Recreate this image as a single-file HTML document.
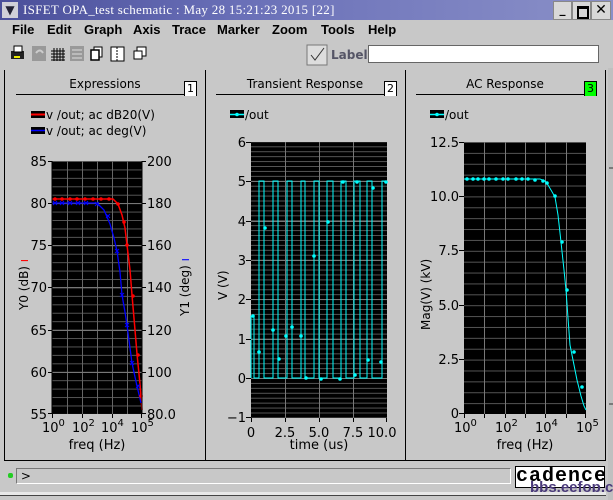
<!DOCTYPE html>
<html><head><meta charset="utf-8"><style>
body{margin:0;width:613px;height:500px;overflow:hidden;background:#c8c8c8;font-family:"DejaVu Sans","Liberation Sans",sans-serif;position:relative}
.a{position:absolute}
#title{left:0;top:0;width:613px;height:20px;background:linear-gradient(90deg,#4a4f9a,#6a70b8 40%,#8a90c8);}
#title span{position:absolute;left:23px;top:2px;color:#fff;font-family:"Liberation Serif",serif;font-size:13px;letter-spacing:0.3px}
.menu{top:22px;font-family:"Liberation Sans",sans-serif;font-weight:bold;font-size:13px;color:#000}
.hdr{font-size:12px;color:#000;text-align:center}
.num{width:11px;height:14px;border:1px solid #000;border-bottom:none;background:#fff;font-size:11px;text-align:center;line-height:14px}
svg text{font-family:"DejaVu Sans",sans-serif}
</style></head><body>
<div id="title" class="a"><span>ISFET OPA_test schematic : May 28 15:21:23 2015 [22]</span>
<div class="a" style="left:2px;top:2px;width:16px;height:16px;background:#d0d0d8;color:#223;font-size:12px;text-align:center;line-height:16px">&#9660;</div>
<div class="a" style="left:553px;top:1px;width:17px;height:17px;background:#d8d8d8;border:1px solid #888;font-weight:bold;font-size:12px;text-align:center">_</div>
<div class="a" style="left:572px;top:1px;width:17px;height:17px;background:#d8d8d8;border:1px solid #888;"><div class="a" style="left:4px;top:4px;width:8px;height:8px;border:2px solid #000;border-top-width:3px"></div></div>
<div class="a" style="left:591px;top:1px;width:18px;height:17px;background:#d8d8d8;border:1px solid #888;font-weight:bold;font-size:14px;text-align:center;line-height:17px">✕</div>
</div>
<div class="a menu" style="left:12px">File</div>
<div class="a menu" style="left:47px">Edit</div>
<div class="a menu" style="left:84px">Graph</div>
<div class="a menu" style="left:133px">Axis</div>
<div class="a menu" style="left:172px">Trace</div>
<div class="a menu" style="left:217px">Marker</div>
<div class="a menu" style="left:272px">Zoom</div>
<div class="a menu" style="left:321px">Tools</div>
<div class="a menu" style="left:368px">Help</div>
<!-- toolbar -->
<svg class="a" style="left:0;top:38px" width="613" height="32">
<rect x="11" y="13" width="13" height="8" fill="#222"/><rect x="14" y="8" width="8" height="6" fill="#fff" stroke="#000"/><rect x="14" y="18" width="6" height="2" fill="#ee0"/>
<rect x="32" y="8" width="14" height="15" fill="#999"/><path d="M36 15 Q40 10 43 15" stroke="#ccc" fill="none" stroke-width="2"/>
<path d="M54 10v13M57 10v13M60 10v13M63 10v13M51 13h14M51 16h14M51 19h14M51 22h14" stroke="#000"/>
<rect x="70" y="8" width="14" height="15" fill="#999"/><path d="M72 12h10M72 16h10M72 20h10" stroke="#bbb" stroke-width="2"/>
<rect x="94" y="9" width="8" height="10" fill="#fff" stroke="#000"/><rect x="91" y="12" width="8" height="10" fill="#fff" stroke="#000" stroke-width="1.5"/>
<rect x="111" y="9" width="13" height="14" fill="#fff" stroke="#000"/><path d="M117 9v14" stroke="#000" stroke-dasharray="2 1"/>
<rect x="137" y="9" width="9" height="9" fill="#fff" stroke="#000"/><rect x="134" y="13" width="8" height="8" fill="#fff" stroke="#000"/>
<rect x="307" y="7" width="20" height="20" fill="#ddd" stroke="#777"/><path d="M311 17l4 5 9-12" stroke="#333" fill="none"/>
<text x="331" y="21" font-family="Liberation Sans" font-weight="bold" font-size="12" fill="#556">Label</text>
<rect x="368.5" y="7.5" width="230" height="17" fill="#fff" stroke="#666"/>
</svg>
<!-- panel frame -->
<svg class="a" style="left:0;top:68px" width="613" height="432">
<defs>
<pattern id="gl" width="200" height="8.43" patternUnits="userSpaceOnUse" y="161"><path d="M0 0.5h200" stroke="#555"/></pattern>
<pattern id="gm" width="200" height="4.93" patternUnits="userSpaceOnUse" y="378"><path d="M0 0.5h200" stroke="#555"/></pattern>
<pattern id="gr" width="200" height="10.88" patternUnits="userSpaceOnUse" y="414"><path d="M0 0.5h200" stroke="#555"/></pattern>
</defs>
<rect x="0" y="0" width="613" height="432" fill="#c8c8c8"/>
<path d="M4.5 2v390M205.5 2v390M405.5 2v390M605.5 2v390" stroke="#000"/>
<path d="M4 392.5h602" stroke="#000"/>
<rect x="608" y="0" width="5" height="432" fill="#c0c0c0"/><path d="M609 100h4M609 336h4" stroke="#333"/>
</svg>
<div class="a hdr" style="left:15px;top:77px;width:180px">Expressions</div>
<div class="a hdr" style="left:215px;top:77px;width:180px">Transient Response</div>
<div class="a hdr" style="left:415px;top:77px;width:180px">AC Response</div>
<div class="a" style="left:16px;top:94px;width:178px;height:1px;background:#000"></div>
<div class="a" style="left:216px;top:94px;width:178px;height:1px;background:#000"></div>
<div class="a" style="left:416px;top:94px;width:178px;height:1px;background:#000"></div>
<div class="a num" style="left:184px;top:81px">1</div>
<div class="a num" style="left:384px;top:81px">2</div>
<div class="a num" style="left:584px;top:81px;background:#0f0">3</div>

<svg class="a" style="left:0;top:0" width="613" height="460">
<!-- LEFT -->
<rect x="31" y="111" width="14" height="7" fill="#000"/><path d="M31 114.5h14" stroke="#f00" stroke-width="2"/>
<text x="46" y="119" font-size="12">v /out; ac dB20(V)</text>
<rect x="31" y="127" width="14" height="7" fill="#000"/><path d="M31 130.5h14" stroke="#00f" stroke-width="1.5"/>
<text x="46" y="135" font-size="12">v /out; ac deg(V)</text>
<rect x="52" y="161" width="90" height="253" fill="#000"/>
<rect x="52" y="161" width="90" height="253" fill="url(#gl)"/>
<path d="M67.5 161v253M82.5 161v253M97.5 161v253M112.5 161v253M127.5 161v253" stroke="#666"/>
<path d="M52 203.5h90M52 245.5h90M52 287.5h90M52 330.5h90M52 372.5h90" stroke="#777"/>
<path d="M52 199 H113 L118 204 L122 215 L125 228 L127 245 L130 270 L132 295 L135 330 L137 354 L140 384 L142 410" stroke="#f00" fill="none" stroke-width="1.5"/>
<path d="M52 203 H97 L104 210 L110 224 L114 238 L117 251 L120 272 L122 295 L125 312 L127 325 L130 348 L132 363 L135 377 L137 386 L141 403" stroke="#00f" fill="none" stroke-width="1.3"/>
<g fill="#f00"><circle cx="55" cy="199" r="1.8"/><circle cx="62" cy="199" r="1.8"/><circle cx="70" cy="199" r="1.8"/><circle cx="77" cy="199" r="1.8"/><circle cx="85" cy="199" r="1.8"/><circle cx="93" cy="199" r="1.8"/><circle cx="101" cy="199" r="1.8"/><circle cx="109" cy="199" r="1.8"/><circle cx="118" cy="204" r="1.8"/><circle cx="124" cy="222" r="1.8"/><circle cx="127" cy="245" r="1.8"/><circle cx="133" cy="296" r="1.8"/><circle cx="138" cy="355" r="1.8"/><circle cx="141" cy="396" r="1.8"/></g>
<g stroke="#00f" stroke-width="1"><path d="M53 201l4 4m0-4l-4 4M60 201l4 4m0-4l-4 4M68 201l4 4m0-4l-4 4M76 201l4 4m0-4l-4 4M84 201l4 4m0-4l-4 4M95 202l4 4m0-4l-4 4M106 214l4 4m0-4l-4 4M115 249l4 4m0-4l-4 4M120 293l4 4m0-4l-4 4M125 323l4 4m0-4l-4 4M130 361l4 4m0-4l-4 4M136 384l4 4m0-4l-4 4"/></g>
<path d="M52 161v253M142 161v253" stroke="#000"/>
<g stroke="#000"><path d="M48 161.5h4M48 203.5h4M48 245.5h4M48 287.5h4M48 330.5h4M48 372.5h4M48 413.5h4M142 161.5h4M142 203.5h4M142 245.5h4M142 287.5h4M142 330.5h4M142 372.5h4M142 413.5h4M52.5 414v4M82.5 414v4M112.5 414v4M141.5 414v4"/></g>
<g font-size="13" text-anchor="end"><text x="47" y="166">85</text><text x="47" y="208">80</text><text x="47" y="250">75</text><text x="47" y="292">70</text><text x="47" y="335">65</text><text x="47" y="377">60</text><text x="47" y="419">55</text></g>
<g font-size="13"><text x="147" y="166">200</text><text x="147" y="208">180</text><text x="147" y="250">160</text><text x="147" y="292">140</text><text x="147" y="335">120</text><text x="147" y="377">100</text><text x="147" y="419">80.0</text></g>
<text transform="translate(28 310) rotate(-90)" font-size="12">Y0 (dB) <tspan fill="#f00">ı</tspan></text>
<text transform="translate(189 316) rotate(-90)" font-size="12">Y1 (deg) <tspan fill="#00f">ı</tspan></text>
<g font-size="13"><text x="42" y="432">10<tspan font-size="10" dy="-6">0</tspan></text><text x="72" y="432">10<tspan font-size="10" dy="-6">2</tspan></text><text x="101" y="432">10<tspan font-size="10" dy="-6">4</tspan></text><text x="131" y="432">10<tspan font-size="10" dy="-6">5</tspan></text></g>
<text x="97" y="449" font-size="13" text-anchor="middle">freq (Hz)</text>

<!-- MIDDLE -->
<rect x="230" y="110" width="14" height="8" fill="#000"/><path d="M230 114.5h14" stroke="#0ff" stroke-width="1.5"/><circle cx="237" cy="114.5" r="1.8" fill="#0ff"/>
<text x="245" y="119" font-size="12">/out</text>
<rect x="251" y="142" width="136" height="276" fill="#000"/>
<rect x="251" y="142" width="136" height="276" fill="url(#gm)"/>
<path d="M285.5 142v276M319.5 142v276M353.5 142v276" stroke="#777"/>
<path d="M251 181.5h136M251 221.5h136M251 260.5h136M251 299.5h136M251 339.5h136M251 378.5h136" stroke="#777"/>
<path d="M251 378 V316 L252 316 H254 V378 H259 V181 H264 V378 H273 V181 H278 V378 H287 V181 H292 V378 H301 V181 H305 V378 H314 V181 H319 V378 H327 V181 H333 V378 H341 V181 H346 V378 H354 V181 H360 V378 H367 V181 H372 V378 H382 V181 H387" stroke="#0ff" fill="none"/>
<g fill="#0ff"><circle cx="253" cy="316" r="1.8"/><circle cx="259" cy="352" r="1.8"/><circle cx="265" cy="228" r="1.8"/><circle cx="273" cy="330" r="1.8"/><circle cx="279" cy="359" r="1.8"/><circle cx="286" cy="336" r="1.8"/><circle cx="292" cy="327" r="1.8"/><circle cx="301" cy="336" r="1.8"/><circle cx="306" cy="378" r="1.8"/><circle cx="314" cy="256" r="1.8"/><circle cx="321" cy="379" r="1.8"/><circle cx="328" cy="222" r="1.8"/><circle cx="340" cy="379" r="1.8"/><circle cx="343" cy="182" r="1.8"/><circle cx="355" cy="375" r="1.8"/><circle cx="357" cy="182" r="1.8"/><circle cx="368" cy="360" r="1.8"/><circle cx="373" cy="188" r="1.8"/><circle cx="381" cy="362" r="1.8"/><circle cx="386" cy="182" r="1.8"/></g>
<g stroke="#000"><path d="M246 142.5h5M246 181.5h5M246 221.5h5M246 260.5h5M246 299.5h5M246 339.5h5M246 378.5h5M246 417.5h5M251.5 418v4M285.5 418v4M319.5 418v4M353.5 418v4M386.5 418v4"/></g>
<g font-size="13" text-anchor="end"><text x="246" y="147">6</text><text x="246" y="186">5</text><text x="246" y="226">4</text><text x="246" y="265">3</text><text x="246" y="304">2</text><text x="246" y="344">1</text><text x="246" y="383">0</text><text x="246" y="422">−1</text></g>
<g font-size="13" text-anchor="middle"><text x="251" y="437">0</text><text x="285" y="437">2.5</text><text x="319" y="437">5.0</text><text x="353" y="437">7.5</text><text x="382" y="437">10.0</text></g>
<text x="319" y="449" font-size="13" text-anchor="middle">time (us)</text>
<text transform="translate(227 300) rotate(-90)" font-size="12">V (V)</text>

<!-- RIGHT -->
<rect x="430" y="110" width="14" height="8" fill="#000"/><path d="M430 114.5h14" stroke="#0ff" stroke-width="1.5"/><circle cx="437" cy="114.5" r="1.8" fill="#0ff"/>
<text x="445" y="119" font-size="12">/out</text>
<rect x="464" y="142" width="122" height="272" fill="#000"/>
<rect x="464" y="142" width="122" height="272" fill="url(#gr)"/>
<path d="M484.5 142v272M505.5 142v272M525.5 142v272M545.5 142v272M566.5 142v272" stroke="#777"/>
<path d="M464 179 H540 L545 181 L548 185 L551 190 L555 197 L558 215 L561 242 L564 270 L566 290 L568 318 L570 345 L574 365 L577 380 L581 396 L584 406 L586 410" stroke="#0ff" fill="none"/>
<g fill="#0ff"><circle cx="467" cy="179" r="1.8"/><circle cx="473" cy="179" r="1.8"/><circle cx="478" cy="179" r="1.8"/><circle cx="484" cy="179" r="1.8"/><circle cx="489" cy="179" r="1.8"/><circle cx="496" cy="179" r="1.8"/><circle cx="503" cy="179" r="1.8"/><circle cx="508" cy="179" r="1.8"/><circle cx="516" cy="179" r="1.8"/><circle cx="522" cy="179" r="1.8"/><circle cx="528" cy="179" r="1.8"/><circle cx="535" cy="180" r="1.8"/><circle cx="543" cy="181" r="1.8"/><circle cx="547" cy="183" r="1.8"/><circle cx="555" cy="196" r="1.8"/><circle cx="562" cy="242" r="1.8"/><circle cx="567" cy="290" r="1.8"/><circle cx="574" cy="352" r="1.8"/><circle cx="582" cy="387" r="1.8"/></g>
<g stroke="#000"><path d="M459 142.5h5M459 196.5h5M459 250.5h5M459 305.5h5M459 359.5h5M459 413.5h5M464.5 414v4M484.5 414v4M505.5 414v4M525.5 414v4M545.5 414v4M566.5 414v4M585.5 414v4"/></g>
<g font-size="13" text-anchor="end"><text x="459" y="147">12.5</text><text x="459" y="201">10.0</text><text x="459" y="255">7.5</text><text x="459" y="310">5.0</text><text x="459" y="364">2.5</text><text x="459" y="418">0</text></g>
<g font-size="13"><text x="454" y="432">10<tspan font-size="10" dy="-6">0</tspan></text><text x="495" y="432">10<tspan font-size="10" dy="-6">2</tspan></text><text x="535" y="432">10<tspan font-size="10" dy="-6">4</tspan></text><text x="576" y="432">10<tspan font-size="10" dy="-6">5</tspan></text></g>
<text x="525" y="449" font-size="13" text-anchor="middle">freq (Hz)</text>
<text transform="translate(430 330) rotate(-90)" font-size="12">Mag(V) (kV)</text>
</svg>
<!-- bottom -->
<div class="a" style="left:8px;top:473px;width:5px;height:5px;background:#2c2;border-radius:2px"></div>
<div class="a" style="left:16px;top:468px;width:493px;height:14px;border:1px solid #777;border-right-color:#fff;border-bottom-color:#fff;font-size:12px;line-height:14px">&nbsp;&gt;</div>
<div class="a" style="left:515px;top:466px;width:88px;height:20px;background:#fff;border:1px solid #000;font-family:'Liberation Mono',monospace;font-weight:bold;font-size:20px;line-height:20px;text-align:center;letter-spacing:1px">cadence</div>
<div class="a" style="left:530px;top:479px;font-family:'Liberation Sans',sans-serif;font-weight:bold;font-size:15px;color:#4a3a7a">bbs.eefop.cn</div>
<div class="a" style="left:0;top:492px;width:606px;height:3px;background:#e8e8e8;border-bottom:1px solid #444"></div>
</body></html>
